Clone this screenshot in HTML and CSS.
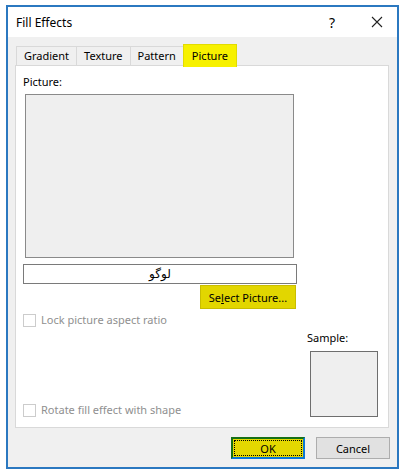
FILE: index.html
```html
<!DOCTYPE html>
<html lang="en">
<head>
    <meta charset="UTF-8">
    <title>Fill Effects</title>
    <link rel="stylesheet" href="styles.css">
</head>
<body>

<div class="dialog">
    <!-- Title bar -->
    <div class="titlebar">
        <span class="title">Fill Effects</span>
        <span class="help">?</span>
        <span class="close">
            <svg width="12" height="12" viewBox="0 0 12 12"><path d="M1 1 L11 11 M11 1 L1 11" stroke="#222" stroke-width="1.1" fill="none"/></svg>
        </span>
    </div>

    <div class="content">
        <!-- Tabs -->
        <div class="tabs">
            <div class="tab">Gradient</div>
            <div class="tab">Texture</div>
            <div class="tab">Pattern</div>
            <div class="tab active">Picture</div>
        </div>

        <div class="panel">
            <div class="label">Picture:</div>
            <div class="pic-col">
                <div class="preview"></div>
                <div class="name-field">لوگو</div>
                <button class="btn select-btn">Se<u>l</u>ect Picture...</button>
            </div>

            <div class="lower">
                <div class="options">
                    <label class="check"><span class="box"></span>Lock picture aspect ratio</label>
                    <label class="check"><span class="box"></span>Rotate fill effect with shape</label>
                </div>
                <div class="sample">
                    <div class="sample-label">Sample:</div>
                    <div class="sample-box"></div>
                </div>
            </div>
        </div>

        <!-- Footer buttons -->
        <div class="footer">
            <button class="btn ok-btn">OK</button>
            <button class="btn cancel-btn">Cancel</button>
        </div>
    </div>
</div>

</body>
</html>
```

FILE: styles.css
```css
body {
    margin: 0;
    background-color: white;
    font-family: "Noto Sans", "DejaVu Sans", sans-serif;
    font-size: 11px;
    color: #000;
}

.dialog {
    box-sizing: border-box;
    width: 393px;
    height: 464px;
    margin: 5px 0 0 6px;
    border: 2px solid #2b78c0;
    background-color: #f0f0f0;
    display: flex;
    flex-direction: column;
}

.titlebar {
    height: 30px;
    background-color: white;
    display: flex;
    align-items: center;
    padding-left: 8px;
}

.title {
    flex: 1;
    font-size: 12px;
}

.help {
    font-size: 14px;
    width: 20px;
    text-align: center;
    margin-right: 25px;
}

.close {
    width: 20px;
    display: flex;
    justify-content: center;
    margin-right: 10px;
}

.content {
    flex: 1;
    padding: 7px 0 0 7px;
}

.tabs {
    display: flex;
    align-items: flex-end;
    height: 21px;
    margin-left: 1px;
}

.tab {
    box-sizing: border-box;
    height: 19px;
    line-height: 18px;
    padding: 0 7px;
    border: 1px solid #d9d9d9;
    border-bottom: none;
    border-right: none;
    background-color: #f0f0f0;
}

.tab.active {
    height: 23px;
    line-height: 21px;
    padding: 0 8px;
    margin-bottom: -2px;
    position: relative;
    z-index: 1;
    background-color: #f7f100;
    border: 1px solid #e2dc00;
    border-bottom: none;
}

.panel {
    box-sizing: border-box;
    width: 374px;
    height: 363px;
    background-color: white;
    border: 1px solid #d9d9d9;
    padding: 8px 10px 10px 7px;
    display: flex;
    flex-direction: column;
}

.label {
    line-height: 16px;
}

.pic-col {
    width: 274px;
    display: flex;
    flex-direction: column;
    align-items: flex-end;
}

.preview {
    box-sizing: border-box;
    width: 269px;
    height: 164px;
    margin: 4px 3px 0 0;
    background-color: #efefef;
    border: 1px solid #8a8a8a;
}

.name-field {
    box-sizing: border-box;
    width: 274px;
    height: 20px;
    margin-top: 6px;
    border: 1px solid #7a7a7a;
    text-align: center;
    line-height: 17px;
    font-size: 12px;
}

.btn {
    box-sizing: border-box;
    font-family: inherit;
    font-size: 11px;
    color: #000;
    padding: 0;
    cursor: pointer;
}

.select-btn {
    width: 96px;
    height: 24px;
    margin: 1px 1px 0 0;
    background-color: #e2d600;
    border: 1px solid #c9bd00;
}

.lower {
    flex: 1;
    display: flex;
    justify-content: space-between;
}

.options {
    display: flex;
    flex-direction: column;
    justify-content: space-between;
    padding-top: 4px;
}

.check {
    display: flex;
    align-items: center;
    color: #8f8f8f;
    line-height: 14px;
}

.box {
    box-sizing: border-box;
    width: 13px;
    height: 13px;
    border: 1px solid #cccccc;
    background-color: white;
    margin-right: 5px;
}

.sample {
    display: flex;
    flex-direction: column;
    justify-content: flex-end;
}

.sample-label {
    line-height: 14px;
    margin-bottom: 6px;
}

.sample-box {
    box-sizing: border-box;
    width: 68px;
    height: 66px;
    margin-left: 3px;
    background-color: #efefef;
    border: 1px solid #6e6e6e;
}

.footer {
    display: flex;
    justify-content: flex-end;
    gap: 11px;
    padding: 9px 7px 0 0;
}

.ok-btn {
    width: 74px;
    height: 22px;
    background-color: #e3d800;
    border: 2px solid;
    border-color: #157015 #0a78d4 #0a78d4 #157015;
    outline: 1px dotted #000;
    outline-offset: -4px;
}

.cancel-btn {
    width: 74px;
    height: 22px;
    background-color: #e1e1e1;
    border: 1px solid #adadad;
}
```
